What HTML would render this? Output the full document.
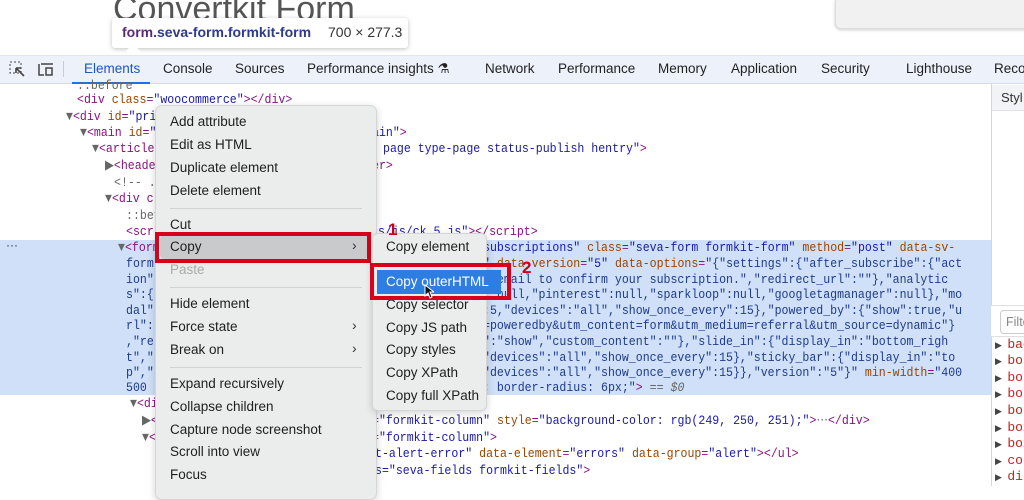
<!DOCTYPE html>
<html><head><meta charset="utf-8"><style>
*{margin:0;padding:0;box-sizing:border-box}
body{width:1024px;height:486px;overflow:hidden;background:#fff;position:relative;font-family:"Liberation Sans",sans-serif}
.a{position:absolute;white-space:pre}
.c{position:absolute;white-space:pre;font-family:"Liberation Mono",monospace;font-size:13px;transform:scaleX(0.89);transform-origin:0 50%;color:#1f3b8c;line-height:15px}
.t{color:#881280}.n{color:#994500}.v{color:#1a1aa6}.g{color:#666}
.tab{position:absolute;top:61px;font-size:13.5px;color:#222}
.mi{position:absolute;left:170px;font-size:13.5px;color:#1e1e1e}
.si{position:absolute;left:386px;font-size:13.5px;color:#1e1e1e}
.sb{position:absolute;left:995px;font-family:"Liberation Mono",monospace;font-size:13px;color:#c5221f;white-space:pre}
</style></head><body>
<div class="a" style="left:113px;top:-10px;font-size:34px;color:#555">Convertkit Form</div>
<div class="a" style="left:835px;top:-4px;width:200px;height:33px;background:#f1f1f1;border:1px solid #ddd;border-radius:6px;box-shadow:0 1px 3px rgba(0,0,0,.2)"></div>
<div class="a" style="left:112px;top:18px;width:296px;height:30px;background:#fff;border-radius:3px;box-shadow:0 1px 5px rgba(0,0,0,.25)"></div>
<div class="a" style="left:128px;top:46px;width:10px;height:10px;background:#fff;transform:rotate(45deg)"></div>
<div class="a" style="left:122px;top:24px;font-size:14px;font-weight:bold;color:#5a2a7a">form<span style="color:#2d3b8a">.seva-form.formkit-form</span></div>
<div class="a" style="left:328px;top:24px;font-size:14px;color:#333">700 × 277.3</div>
<!-- tab bar -->
<div class="a" style="left:0;top:55px;width:1024px;height:29px;background:#edf2fa;border-top:1px solid #dfe6f1;border-bottom:1px solid #d6dde8"></div>
<svg class="a" style="left:9px;top:61px" width="18" height="16"><rect x="1" y="1" width="11" height="11" fill="none" stroke="#444" stroke-dasharray="2 2"/><path d="M7 7l8 8M7 7h5M7 7v5" stroke="#444" stroke-width="1.6" fill="none"/></svg>
<svg class="a" style="left:37px;top:61px" width="18" height="16"><path d="M2 3v11h5M4 3h12" stroke="#444" stroke-width="1.5" fill="none"/><rect x="9" y="7" width="6" height="7" fill="none" stroke="#444" stroke-width="1.5"/></svg>
<div class="a" style="left:63px;top:61px;width:1px;height:16px;background:#ccc"></div>
<div class="tab" style="left:84px;color:#1a56c4">Elements</div>
<div class="a" style="left:72px;top:82px;width:78px;height:2px;background:#1a73e8"></div>
<div class="tab" style="left:163px">Console</div>
<div class="tab" style="left:235px">Sources</div>
<div class="tab" style="left:307px">Performance insights ⚗</div>
<div class="tab" style="left:485px">Network</div>
<div class="tab" style="left:558px">Performance</div>
<div class="tab" style="left:658px">Memory</div>
<div class="tab" style="left:731px">Application</div>
<div class="tab" style="left:821px">Security</div>
<div class="tab" style="left:906px">Lighthouse</div>
<div class="tab" style="left:994px">Reco</div>
<!-- sidebar -->
<div class="a" style="left:991px;top:84px;width:33px;height:402px;border-left:1px solid #d6d6d6;background:#fff"></div>
<div class="a" style="left:992px;top:85px;width:32px;height:26px;background:#f1f3f6;border-bottom:1px solid #e0e0e0"></div>
<div class="a" style="left:1001px;top:90px;font-size:13px;color:#333">Styl</div>
<div class="a" style="left:991px;top:305px;width:33px;height:32px;background:#fff;border-top:1px solid #e0e0e0;border-bottom:1px solid #e0e0e0"></div>
<div class="a" style="left:1000px;top:310px;width:30px;height:24px;border:1px solid #ccc;border-radius:4px;font-size:12.5px;color:#888;padding:4px 0 0 5px">Filter</div>
<div class="sb" style="top:337px"><span style="color:#444;font-size:9px">▶ </span>bac</div>
<div class="sb" style="top:353px"><span style="color:#444;font-size:9px">▶ </span>bor</div>
<div class="sb" style="top:370px"><span style="color:#444;font-size:9px">▶ </span>bor</div>
<div class="sb" style="top:386px"><span style="color:#444;font-size:9px">▶ </span>bor</div>
<div class="sb" style="top:403px"><span style="color:#444;font-size:9px">▶ </span>bor</div>
<div class="sb" style="top:420px"><span style="color:#444;font-size:9px">▶ </span>box</div>
<div class="sb" style="top:436px"><span style="color:#444;font-size:9px">▶ </span>box</div>
<div class="sb" style="top:453px"><span style="color:#444;font-size:9px">▶ </span>col</div>
<div class="sb" style="top:469px"><span style="color:#444;font-size:9px">▶ </span>dis</div>
<!-- code -->
<div class="a" style="left:0;top:240px;width:991px;height:155px;background:#cfe0f8"></div>
<div class="a" style="left:6px;top:238px;font-size:12px;color:#333">···</div>
<div class="c g" style="left:77px;top:78px">::before</div>
<div class="c" style="left:77px;top:92px"><span class="t">&lt;div </span><span class="n">class</span><span class="t">=</span><span class="v">"woocommerce"</span><span class="t">&gt;&lt;/div&gt;</span></div>
<div class="c" style="left:66px;top:109px"><span class="g">▼</span><span class="t">&lt;div </span><span class="n">id</span><span class="t">=</span><span class="v">"primary"</span></div>
<div class="c" style="left:80px;top:125px"><span class="g">▼</span><span class="t">&lt;main </span><span class="n">id</span><span class="t">=</span><span class="v">"main"</span></div>
<div class="c" style="left:372px;top:125px"><span class="v">ain"</span><span class="t">&gt;</span></div>
<div class="c" style="left:92px;top:141px"><span class="g">▼</span><span class="t">&lt;article</span></div>
<div class="c" style="left:383px;top:141px"><span class="v">page type-page status-publish hentry"</span><span class="t">&gt;</span></div>
<div class="c" style="left:105px;top:158px"><span class="g">▶</span><span class="t">&lt;header</span></div>
<div class="c" style="left:372px;top:158px"><span class="t">er&gt;</span></div>
<div class="c g" style="left:114px;top:175px">&lt;!-- .</div>
<div class="c" style="left:105px;top:191px"><span class="g">▼</span><span class="t">&lt;div c</span></div>
<div class="c g" style="left:126px;top:208px">::before</div>
<div class="c" style="left:126px;top:224px"><span class="t">&lt;scr</span></div>
<div class="c" style="left:378px;top:224px"><span class="v">s/js/ck.5.js"</span><span class="t">&gt;&lt;/script&gt;</span></div>
<div class="c" style="left:118px;top:240px"><span class="g">▼</span><span class="t">&lt;form</span></div>
<div class="c" style="left:483px;top:240px"><span class="v">subscriptions"</span> <span class="n">class</span><span class="t">=</span><span class="v">"seva-form formkit-form"</span> <span class="n">method</span><span class="t">=</span><span class="v">"post"</span> <span class="n">data-sv-</span></div>
<div class="c" style="left:126px;top:256px">form</div>
<div class="c" style="left:483px;top:256px"><span class="v">"</span> <span class="n">data-version</span><span class="t">=</span><span class="v">"5"</span> <span class="n">data-options</span><span class="t">=</span>"{"settings":{"after_subscribe":{"act</div>
<div class="c" style="left:126px;top:272px">ion"</div>
<div class="c" style="left:483px;top:272px">r email to confirm your subscription.","redirect_url":""},"analytic</div>
<div class="c" style="left:126px;top:287px">s":{</div>
<div class="c" style="left:483px;top:287px">":null,"pinterest":null,"sparkloop":null,"googletagmanager":null},"mo</div>
<div class="c" style="left:126px;top:303px">dal"</div>
<div class="c" style="left:483px;top:303px">:5,"devices":"all","show_once_every":15},"powered_by":{"show":true,"u</div>
<div class="c" style="left:126px;top:318px">rl":</div>
<div class="c" style="left:483px;top:318px">=poweredby&amp;utm_content=form&amp;utm_medium=referral&amp;utm_source=dynamic"}</div>
<div class="c" style="left:126px;top:334px">,"re</div>
<div class="c" style="left:483px;top:334px">":"show","custom_content":""},"slide_in":{"display_in":"bottom_righ</div>
<div class="c" style="left:126px;top:350px">t","</div>
<div class="c" style="left:483px;top:350px">"devices":"all","show_once_every":15},"sticky_bar":{"display_in":"to</div>
<div class="c" style="left:126px;top:365px">p","</div>
<div class="c" style="left:483px;top:365px">"devices":"all","show_once_every":15}},"version":"5"}" <span class="n">min-width</span><span class="t">=</span>"400</div>
<div class="c" style="left:126px;top:380px">500 </div>
<div class="c" style="left:483px;top:380px">; border-radius: 6px;"<span class="t">&gt;</span> <span class="g">== <i>$0</i></span></div>
<div class="c" style="left:130px;top:396px"><span class="g">▼</span><span class="t">&lt;div</span></div>
<div class="c" style="left:142px;top:413px"><span class="g">▶</span><span class="t">&lt;</span></div>
<div class="c" style="left:372px;top:413px"><span class="t">=</span><span class="v">"formkit-column"</span> <span class="n">style</span><span class="t">=</span><span class="v">"background-color: rgb(249, 250, 251);"</span><span class="t">&gt;</span><span class="g">⋯</span><span class="t">&lt;/div&gt;</span></div>
<div class="c" style="left:142px;top:430px"><span class="g">▼</span><span class="t">&lt;</span></div>
<div class="c" style="left:372px;top:430px"><span class="t">=</span><span class="v">"formkit-column"</span><span class="t">&gt;</span></div>
<div class="c" style="left:375px;top:446px"><span class="v">t-alert-error"</span> <span class="n">data-element</span><span class="t">=</span><span class="v">"errors"</span> <span class="n">data-group</span><span class="t">=</span><span class="v">"alert"</span><span class="t">&gt;&lt;/ul&gt;</span></div>
<div class="c" style="left:375px;top:463px"><span class="v">s="seva-fields formkit-fields"</span><span class="t">&gt;</span></div>
<!-- context menu -->
<div class="a" style="left:155px;top:105px;width:222px;height:395px;background:#ebedec;border:1px solid #d5d5d5;border-radius:7px;box-shadow:0 2px 8px rgba(0,0,0,.18)"></div>
<div class="mi" style="top:114px">Add attribute</div>
<div class="mi" style="top:137px">Edit as HTML</div>
<div class="mi" style="top:160px">Duplicate element</div>
<div class="mi" style="top:183px">Delete element</div>
<div class="a" style="left:170px;top:208px;width:192px;height:1px;background:#d3d3d3"></div>
<div class="mi" style="top:217px">Cut</div>
<div class="a" style="left:160px;top:235px;width:208px;height:24px;background:#c8cacc;border-radius:4px"></div>
<div class="mi" style="top:239px">Copy</div>
<div class="a" style="left:352px;top:237px;font-size:14px;color:#333">›</div>
<div class="mi" style="top:262px;color:#aaa">Paste</div>
<div class="a" style="left:170px;top:287px;width:192px;height:1px;background:#d3d3d3"></div>
<div class="mi" style="top:296px">Hide element</div>
<div class="mi" style="top:319px">Force state</div>
<div class="a" style="left:352px;top:317px;font-size:14px;color:#333">›</div>
<div class="mi" style="top:342px">Break on</div>
<div class="a" style="left:352px;top:340px;font-size:14px;color:#333">›</div>
<div class="a" style="left:170px;top:367px;width:192px;height:1px;background:#d3d3d3"></div>
<div class="mi" style="top:376px">Expand recursively</div>
<div class="mi" style="top:399px">Collapse children</div>
<div class="mi" style="top:422px">Capture node screenshot</div>
<div class="mi" style="top:444px">Scroll into view</div>
<div class="mi" style="top:467px">Focus</div>
<div class="a" style="left:155px;top:232px;width:216px;height:31px;border:4px solid #d8001a"></div>
<!-- submenu -->
<div class="a" style="left:372px;top:233px;width:115px;height:178px;background:#ebedec;border:1px solid #d5d5d5;border-radius:6px;box-shadow:0 2px 8px rgba(0,0,0,.18)"></div>
<div class="si" style="top:239px">Copy element</div>
<div class="a" style="left:377px;top:270px;width:124px;height:24px;background:#2e7de1"></div>
<div class="si" style="top:274px;color:#fff">Copy outerHTML</div>
<div class="si" style="top:297px">Copy selector</div>
<div class="si" style="top:320px">Copy JS path</div>
<div class="si" style="top:342px">Copy styles</div>
<div class="si" style="top:365px">Copy XPath</div>
<div class="si" style="top:388px">Copy full XPath</div>
<div class="a" style="left:370px;top:263px;width:141px;height:37px;border:4px solid #d8001a"></div>
<div class="a" style="left:388px;top:220px;font-size:17px;font-weight:bold;color:#c8001a">1</div>
<div class="a" style="left:522px;top:258px;font-size:17px;font-weight:bold;color:#c8001a">2</div>
<svg class="a" style="left:424px;top:284px" width="10" height="15"><path d="M1 1v11l3-3 2 5 2-1-2-5h4z" fill="#111" stroke="#fff" stroke-width="1"/></svg>
</body></html>
